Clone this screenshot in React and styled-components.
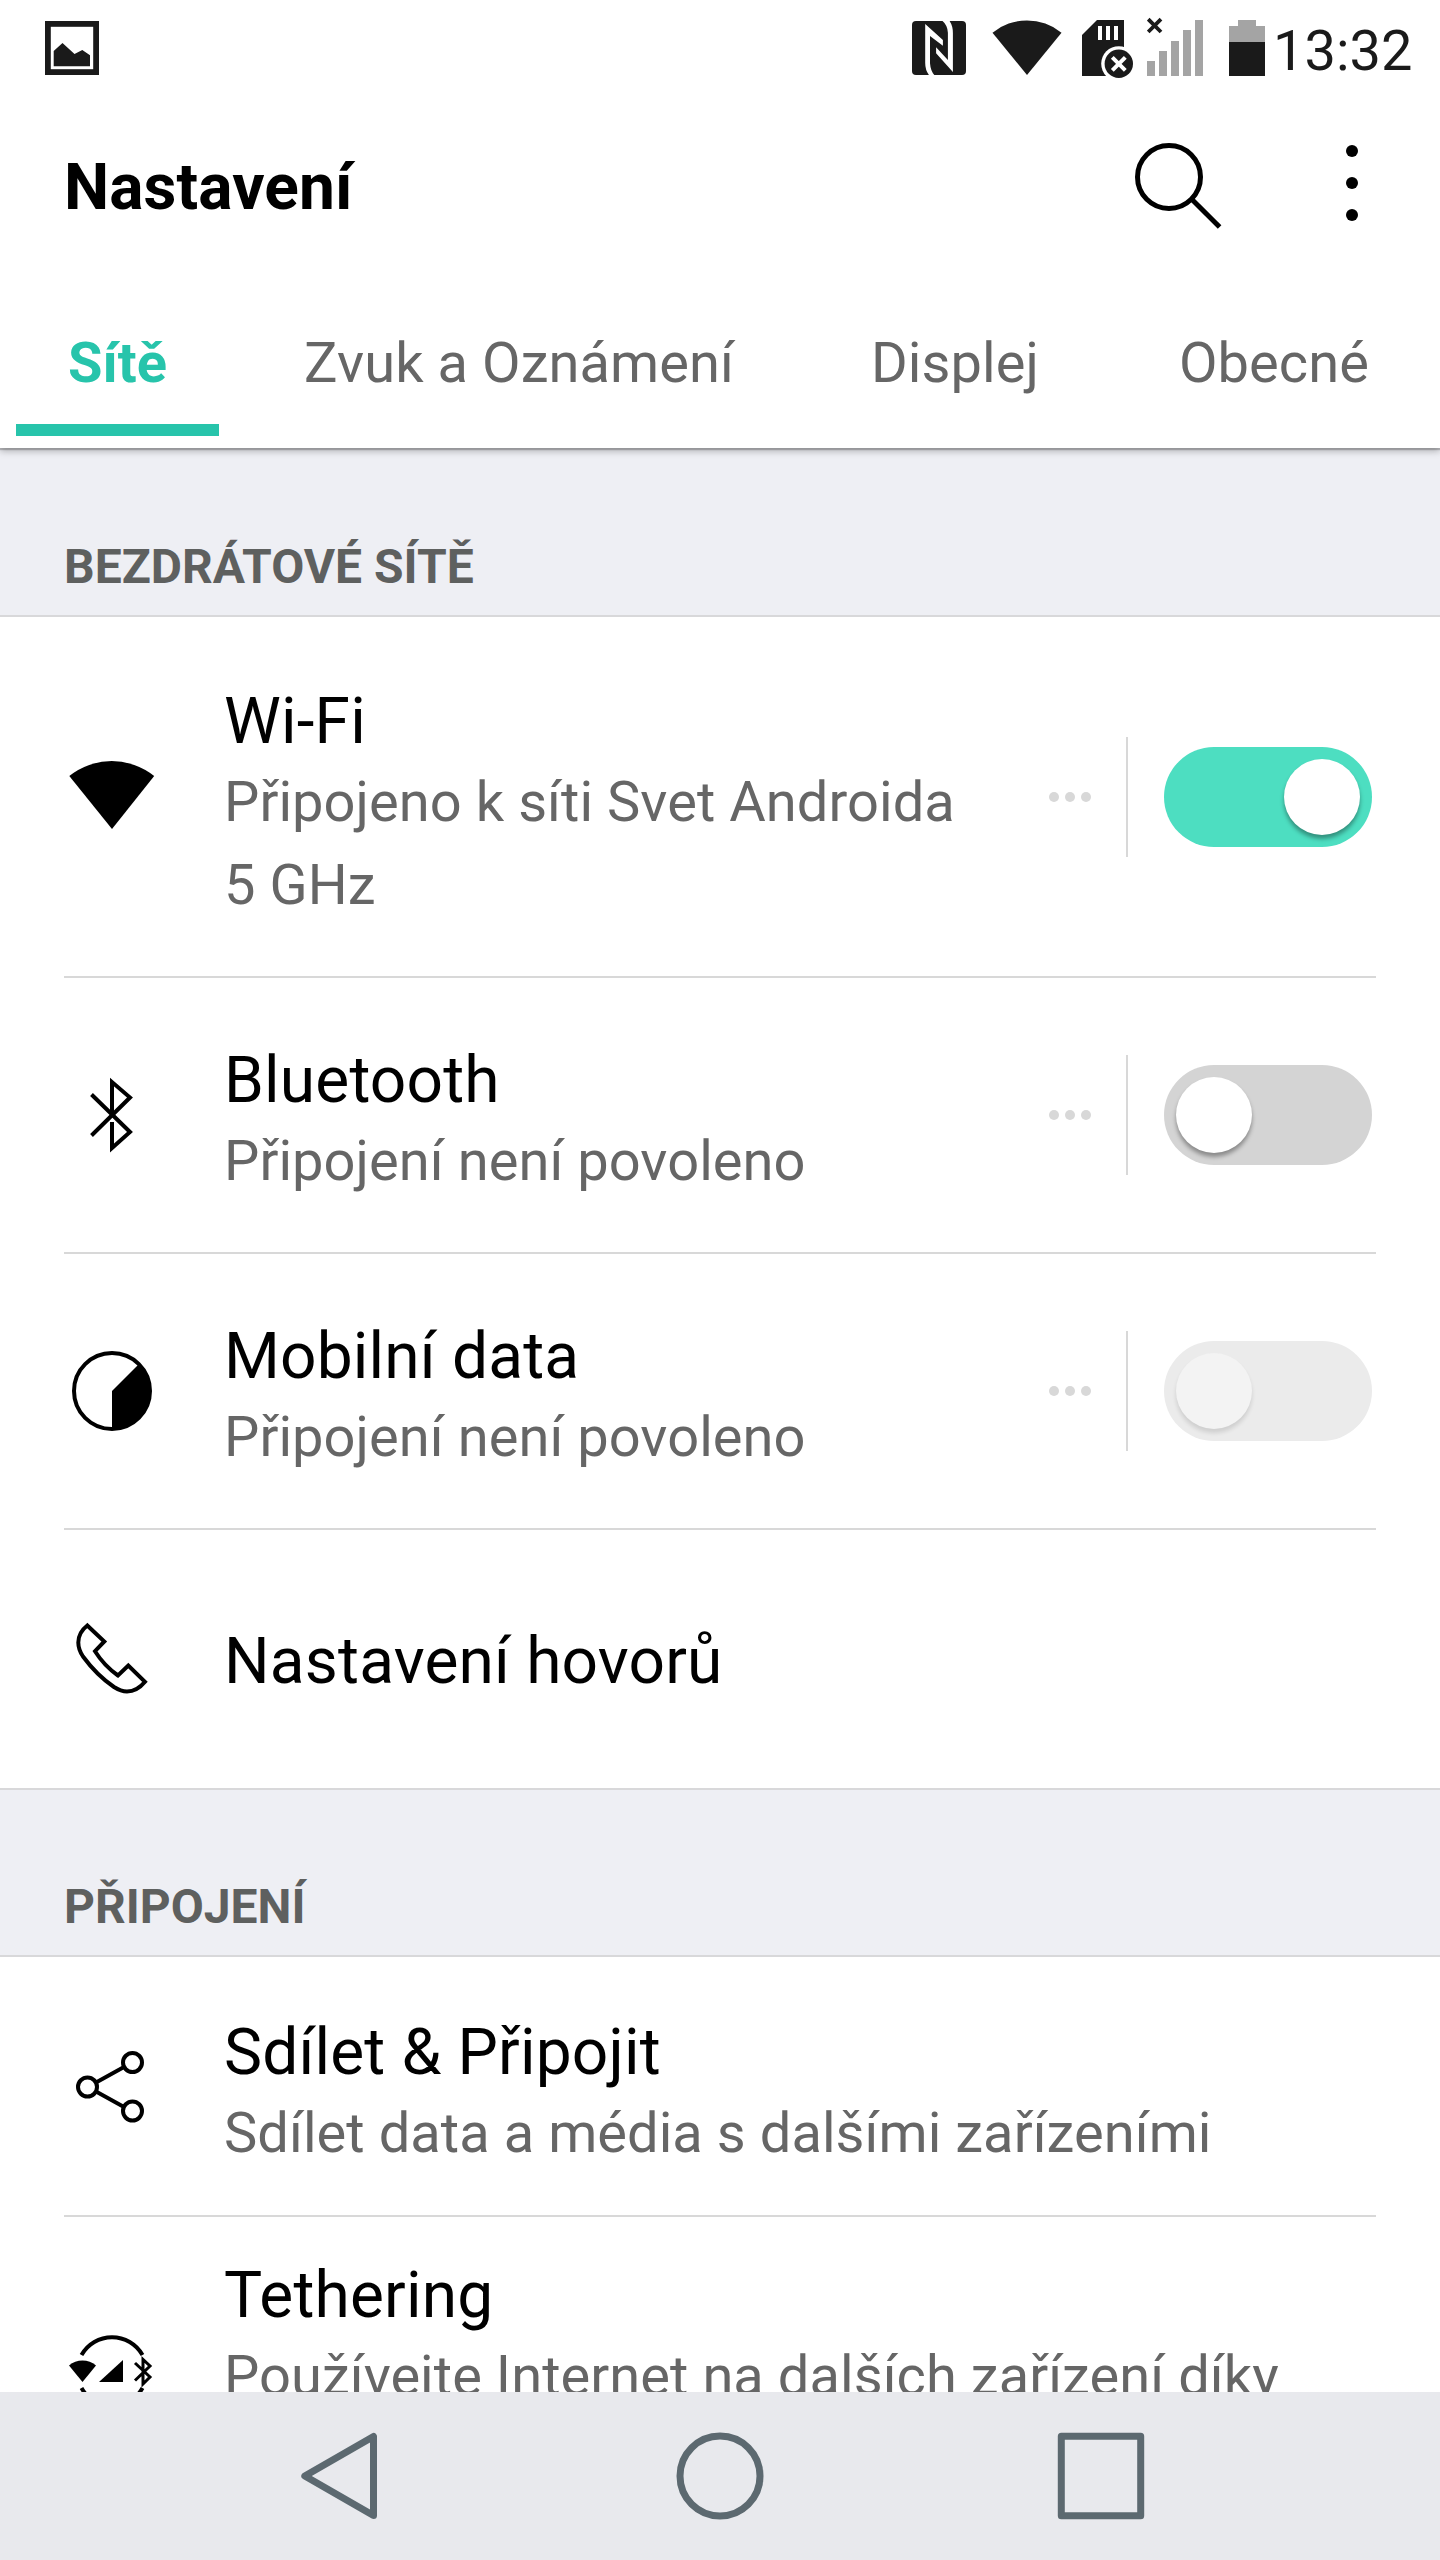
import styled, { createGlobalStyle, css } from "styled-components";

const GlobalStyle = createGlobalStyle`
  * {
    box-sizing: border-box;
  }

  body {
    margin: 0;
    background-color: #ffffff;
    font-family: Roboto, "Noto Sans", sans-serif;
  }

  svg {
    display: block;
    flex-shrink: 0;
  }
`;

const tabs = [
  { label: "Sítě", width: 203, active: true },
  { label: "Zvuk a Oznámení", width: 600 },
  { label: "Displej", width: 272 },
  { label: "Obecné", width: 366 },
];

const WifiIcon = () => (
  <svg width="96" height="96" viewBox="64 749 96 96">
    <path d="M112 829 L69.3 776 A68 68 0 0 1 154.2 776 Z" />
  </svg>
);

const BluetoothIcon = () => (
  <svg width="96" height="96" viewBox="64 1067 96 96">
    <g fill="none" stroke="#000" strokeWidth="4">
      <path d="M91.5 1135.5 L130 1097.5 L112 1082 V1115" />
      <path d="M91.5 1094.5 L130 1132 L112 1148 V1122" />
    </g>
  </svg>
);

const DataIcon = () => (
  <svg width="96" height="96" viewBox="0 0 96 96">
    <circle cx="48" cy="48" r="38" fill="none" stroke="#000" strokeWidth="4" />
    <path d="M48 48 L75.5 20.5 A39 39 0 0 1 48 87 Z" />
  </svg>
);

const PhoneIcon = () => (
  <svg width="96" height="96" viewBox="64 1610.5 96 96">
    <path
      d="M87.3 1626 L104.3 1642 L95 1651.7 Q104 1666 118 1676 L128.3 1666 L145 1682.3 Q137 1692 127 1692 Q121 1692 114 1687.5 Q97 1676 83 1657 Q78.3 1650 78.3 1643 Q78.3 1633 87.3 1626 Z"
      fill="none"
      stroke="#000"
      strokeWidth="4"
    />
  </svg>
);

const ShareIcon = () => (
  <svg width="96" height="96" viewBox="64 2039 96 96">
    <g fill="none" stroke="#000" strokeWidth="4">
      <circle cx="87.5" cy="2087" r="9.5" />
      <circle cx="132.5" cy="2062.5" r="9.5" />
      <circle cx="132.5" cy="2111" r="9.5" />
      <path d="M96 2082.5 L124 2067 M96 2091.5 L124 2107" />
    </g>
  </svg>
);

const TetheringIcon = () => (
  <svg width="96" height="96" viewBox="64 2324 96 96">
    <path
      d="M81.5 2355 A35 35 0 0 1 142.5 2355 M81.5 2388 A35 35 0 0 0 142.5 2388"
      fill="none"
      stroke="#000"
      strokeWidth="4"
    />
    <path d="M82.5 2382 L69 2365.5 A21 21 0 0 1 96 2365.5 Z" />
    <path d="M99 2382 H123 V2360 Z" />
    <path
      d="M135 2380.5 L150 2366 L143 2359.5 V2384 L150 2377 L135 2363"
      fill="none"
      stroke="#000"
      strokeWidth="3"
    />
  </svg>
);

const sections = [
  {
    title: "Bezdrátové sítě",
    rows: [
      {
        title: "Wi-Fi",
        summary: "Připojeno k síti Svet Androida 5 GHz",
        icon: <WifiIcon />,
        toggle: "on",
        height: 361,
        top: 66,
      },
      {
        title: "Bluetooth",
        summary: "Připojení není povoleno",
        icon: <BluetoothIcon />,
        toggle: "off",
        height: 276,
        top: 65,
      },
      {
        title: "Mobilní data",
        summary: "Připojení není povoleno",
        icon: <DataIcon />,
        toggle: "disabled",
        height: 276,
        top: 65,
      },
      {
        title: "Nastavení hovorů",
        icon: <PhoneIcon />,
        height: 258,
        top: 94,
      },
    ],
  },
  {
    title: "Připojení",
    rows: [
      {
        title: "Sdílet & Připojit",
        summary: "Sdílet data a média s dalšími zařízeními",
        icon: <ShareIcon />,
        height: 260,
        top: 57,
      },
      {
        title: "Tethering",
        summary: "Používejte Internet na dalších zařízení díky",
        icon: <TetheringIcon />,
        height: 312,
        top: 41,
      },
    ],
  },
];

const StatusIcons = () => (
  <>
    <svg width="54" height="96" viewBox="0 0 54 96">
      <rect y="21" width="54" height="54" rx="4" fill="#1a1a1a" />
      <g transform="translate(0 21)" fill="#fff">
        <path d="M13.2 3 L30.9 19 V24.7 L18 15 V42.3 Q18.6 50 22.3 54 H16.9 Q13.2 49 13.2 42 Z" />
        <path d="M40.9 51 L24.1 32.3 V26.3 L35.9 39 V11.7 Q35.4 4 30.5 0 H37.6 Q40.9 5 40.9 12 Z" />
      </g>
    </svg>
    <svg width="70" height="96" viewBox="992 0 70 96">
      <path d="M1027 75 L992.5 32.7 A54.8 54.8 0 0 1 1061.5 32.7 Z" fill="#1a1a1a" />
    </svg>
    <svg width="51" height="96" viewBox="1082 0 51 96">
      <path d="M1082 35 L1097 20 H1124 V76 H1082 Z" fill="#1a1a1a" />
      <path d="M1098 26h4v14h-4z M1106 26h4v14h-4z M1114 26h4v14h-4z" fill="#fff" />
      <circle cx="1118.8" cy="63.8" r="17.6" fill="#fff" />
      <circle cx="1118.8" cy="63.8" r="14.2" fill="#1a1a1a" />
      <path
        d="M1112.3 57.3 L1125.3 70.3 M1125.3 57.3 L1112.3 70.3"
        stroke="#fff"
        strokeWidth="4"
      />
    </svg>
    <svg width="56" height="96" viewBox="1147 0 56 96">
      <path
        d="M1148.2 19.2 L1161 32 M1161 19.2 L1148.2 32"
        stroke="#1a1a1a"
        strokeWidth="3.8"
      />
      <path
        d="M1147 61h8v15h-8z M1159 51h8v25h-8z M1171 41h8v35h-8z M1183 30h8v46h-8z M1195 20h8v56h-8z"
        fill="#a4a4a4"
      />
    </svg>
    <svg width="36" height="96" viewBox="0 0 36 96">
      <path d="M9 20h18v6h9v16H0V26h9z" fill="#a4a4a4" />
      <path d="M0 42h36v34H0z" fill="#1a1a1a" />
    </svg>
  </>
);

const SettingRow = ({ row }) => (
  <Row $height={row.height}>
    {row.icon}
    <RowText $top={row.top}>
      <RowTitle>{row.title}</RowTitle>
      {row.summary && (
        <RowSummary $narrow={Boolean(row.toggle)}>{row.summary}</RowSummary>
      )}
    </RowText>
    {row.toggle && (
      <RowControls>
        <MoreDots>
          <span />
          <span />
          <span />
        </MoreDots>
        <Divider />
        <Toggle $state={row.toggle}>
          <span />
        </Toggle>
      </RowControls>
    )}
  </Row>
);

const App = () => {
  return (
    <Screen>
      <GlobalStyle />
      <Header>
        <StatusBar>
          <svg width="54" height="96" viewBox="0 0 54 96">
            <rect
              x="2.9"
              y="23.9"
              width="48.2"
              height="48.2"
              fill="none"
              stroke="#1a1a1a"
              strokeWidth="5.8"
            />
            <path
              d="M8.7 51 L17.5 43 L29.5 54 L37.3 50 L45 55.3 V66.3 H8.7 Z"
              fill="#1a1a1a"
            />
          </svg>
          <StatusGroup>
            <StatusIcons />
            <Clock>13:32</Clock>
          </StatusGroup>
        </StatusBar>

        <AppBar>
          <Title>Nastavení</Title>
          <svg width="90" height="182" viewBox="1134 96 90 182">
            <g fill="none" stroke="#000" strokeWidth="5">
              <circle cx="1169" cy="177" r="31.5" />
              <path d="M1192 199.5 L1219.6 227" />
            </g>
          </svg>
          <svg width="12" height="182" viewBox="0 96 12 182">
            <circle cx="6" cy="151" r="6" />
            <circle cx="6" cy="183" r="6" />
            <circle cx="6" cy="215" r="6" />
          </svg>
        </AppBar>

        <Tabs>
          {tabs.map((tab) => (
            <Tab key={tab.label} $width={tab.width} $active={tab.active}>
              {tab.label}
            </Tab>
          ))}
        </Tabs>
      </Header>

      <Content>
        {sections.map((section, index) => (
          <section key={section.title}>
            <SectionHeader $first={index === 0}>{section.title}</SectionHeader>
            {section.rows.map((row) => (
              <SettingRow key={row.title} row={row} />
            ))}
          </section>
        ))}
      </Content>

      <NavBar>
        <svg width="88" height="88" viewBox="0 0 88 88">
          <path d="M78.5 4.5 V83.5 L9.8 44 Z" />
        </svg>
        <svg width="88" height="88" viewBox="0 0 88 88">
          <circle cx="44" cy="44" r="40" />
        </svg>
        <svg width="88" height="88" viewBox="0 0 88 88">
          <rect x="4.3" y="4.3" width="79.4" height="79.4" />
        </svg>
      </NavBar>
    </Screen>
  );
};

export default App;

const Screen = styled.div`
  display: flex;
  flex-direction: column;
  width: 1440px;
  height: 2560px;
  overflow: hidden;
  background-color: #ffffff;
`;

const Header = styled.header`
  position: relative;
  z-index: 1;
  flex-shrink: 0;
  height: 448px;
  background-color: #ffffff;
  box-shadow: 0 2px 1px rgba(0, 0, 0, 0.2), 0 3px 7px rgba(0, 0, 0, 0.28);
`;

const StatusBar = styled.div`
  display: flex;
  justify-content: space-between;
  height: 96px;
  padding: 0 26px 0 45px;
`;

const StatusGroup = styled.div`
  display: flex;

  svg:nth-of-type(2) {
    margin-left: 26px;
  }

  svg:nth-of-type(3) {
    margin-left: 20px;
  }

  svg:nth-of-type(4) {
    margin-left: 14px;
  }

  svg:nth-of-type(5) {
    margin-left: 26px;
  }
`;

const Clock = styled.div`
  width: 141px;
  margin-left: 8px;
  line-height: 102px;
  font-size: 56px;
  color: #1a1a1a;
`;

const AppBar = styled.div`
  display: flex;
  align-items: center;
  height: 182px;
  padding: 0 82px 0 64px;

  svg:last-child {
    margin-left: 122px;
  }
`;

const Title = styled.h1`
  flex: 1;
  margin: 0;
  font-size: 64px;
  font-weight: 700;
  letter-spacing: 0.1px;
  color: #000000;
`;

const Tabs = styled.nav`
  display: flex;
  height: 158px;
  padding-left: 16px;
`;

const Tab = styled.div`
  display: flex;
  flex-shrink: 0;
  align-items: center;
  justify-content: center;
  width: ${({ $width }) => $width}px;
  padding-top: 24px;
  border-bottom: 12px solid transparent;
  font-size: 56px;
  letter-spacing: 0.07px;
  white-space: nowrap;
  color: #666666;

  ${({ $active }) =>
    $active &&
    css`
      border-color: #27c4ab;
      font-weight: 700;
      letter-spacing: 0;
      color: #27c4ab;
    `}
`;

const Content = styled.main`
  flex: 1;
  min-height: 0;
  overflow: hidden;
`;

const SectionHeader = styled.h2`
  display: flex;
  align-items: flex-end;
  height: 169px;
  margin: 0;
  padding: 0 64px 20px;
  border-top: ${({ $first }) => ($first ? "none" : "2px solid #d8d8da")};
  border-bottom: 2px solid #d8d8da;
  background-color: #eeeff4;
  font-size: 48px;
  font-weight: 700;
  text-transform: uppercase;
  color: #5e605f;
`;

const Row = styled.div`
  display: flex;
  align-items: center;
  height: ${({ $height }) => $height}px;
  margin: 0 64px;
  border-bottom: 2px solid #d8d8d8;

  &:first-of-type {
    padding-top: 1px;
  }

  &:last-child {
    border-bottom-color: transparent;
  }
`;

const RowText = styled.div`
  flex: 1;
  align-self: flex-start;
  margin-left: 64px;
  padding-top: ${({ $top }) => $top}px;
`;

const RowTitle = styled.div`
  line-height: 75px;
  font-size: 64px;
  letter-spacing: 0.18px;
  color: #000000;
`;

const RowSummary = styled.div`
  width: ${({ $narrow }) => ($narrow ? "745px" : "auto")};
  margin-top: 2px;
  line-height: 83px;
  font-size: 56px;
  letter-spacing: 0.06px;
  color: #666666;
`;

const RowControls = styled.div`
  display: flex;
  align-items: center;
  margin-right: 4px;
`;

const MoreDots = styled.div`
  display: flex;
  gap: 6px;

  span {
    width: 10px;
    height: 10px;
    border-radius: 50%;
    background-color: #d8d8d8;
  }
`;

const Divider = styled.div`
  width: 2px;
  height: 120px;
  margin: 0 36px 0 35px;
  background-color: #d8d8d8;
`;

const trackColors = {
  on: "#4ddec1",
  off: "#d4d4d4",
  disabled: "#ebebeb",
};

const Toggle = styled.div`
  display: flex;
  justify-content: ${({ $state }) =>
    $state === "on" ? "flex-end" : "flex-start"};
  width: 208px;
  height: 100px;
  padding: 12px;
  border-radius: 50px;
  background-color: ${({ $state }) => trackColors[$state]};

  span {
    width: 76px;
    height: 76px;
    border-radius: 50%;
    background-color: ${({ $state }) =>
      $state === "disabled" ? "#f3f3f3" : "#ffffff"};
    box-shadow: 0 4px 4px
      rgba(0, 0, 0, ${({ $state }) => ($state === "disabled" ? 0.12 : 0.35)});
  }
`;

const NavBar = styled.footer`
  display: flex;
  align-items: center;
  justify-content: center;
  gap: 293px;
  flex-shrink: 0;
  height: 168px;
  background-color: #e8e9ed;

  svg {
    fill: none;
    stroke: #5c6970;
    stroke-width: 7px;
    stroke-linejoin: round;
  }
`;
